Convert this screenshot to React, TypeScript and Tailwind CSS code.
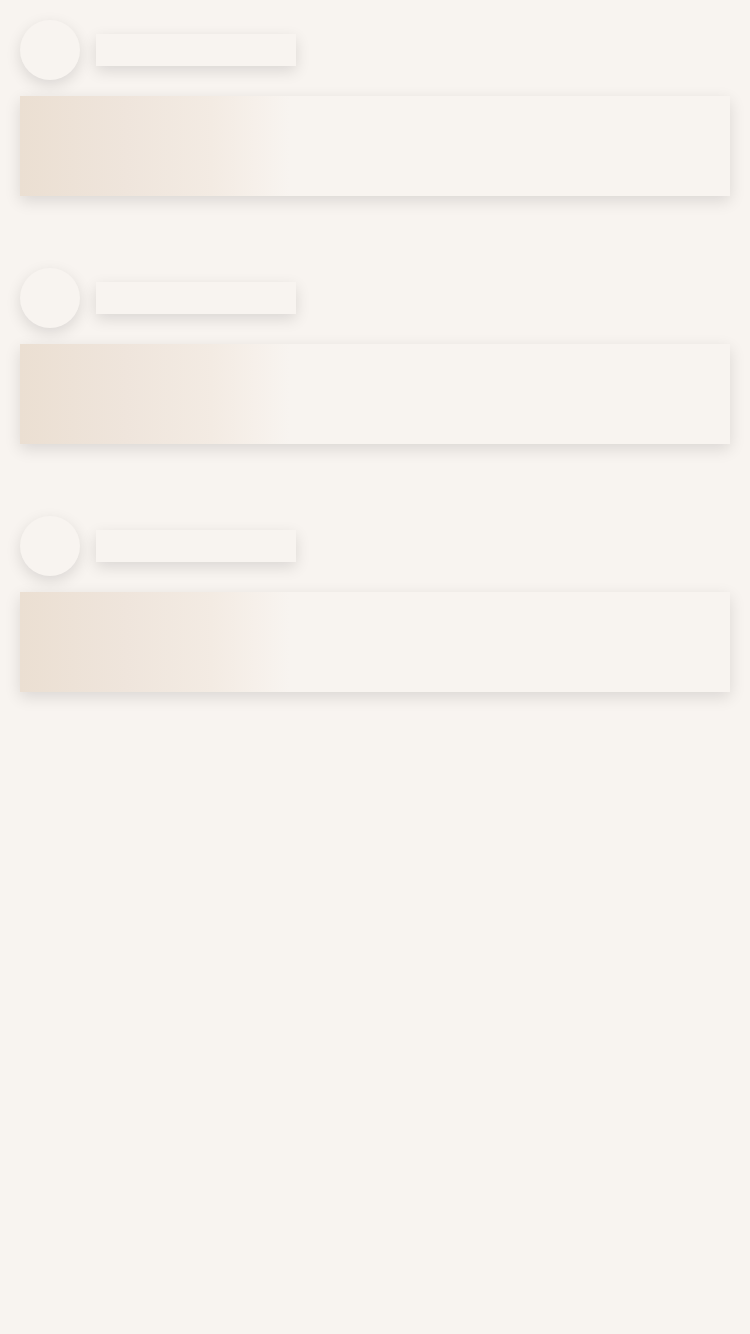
export default function App() {
  const groups = [0, 1, 2];
  return (
    <div className="min-h-[1334px] w-[750px] bg-[#f8f4f0] px-5 pt-5">
      <div className="flex flex-col gap-[72px]">
        {groups.map((g) => (
          <div key={g} className="flex flex-col gap-4">
            <div className="flex items-center gap-4">
              <div className="h-[60px] w-[60px] rounded-full bg-[#f8f4f0] shadow-[0_5px_15px_rgba(0,0,0,0.12)]" />
              <div className="h-8 w-[200px] bg-[#f8f4f0] shadow-[0_5px_15px_rgba(0,0,0,0.12)]" />
            </div>
            <div className="h-[100px] w-full bg-[linear-gradient(to_right,#ebdfd2_0%,#efe5dc_15%,#f3ebe3_27%,#f6f0ea_33%,#f8f4f0_38%,#f8f4f0_100%)] shadow-[0_5px_15px_rgba(0,0,0,0.12)]" />
          </div>
        ))}
      </div>
    </div>
  );
}
